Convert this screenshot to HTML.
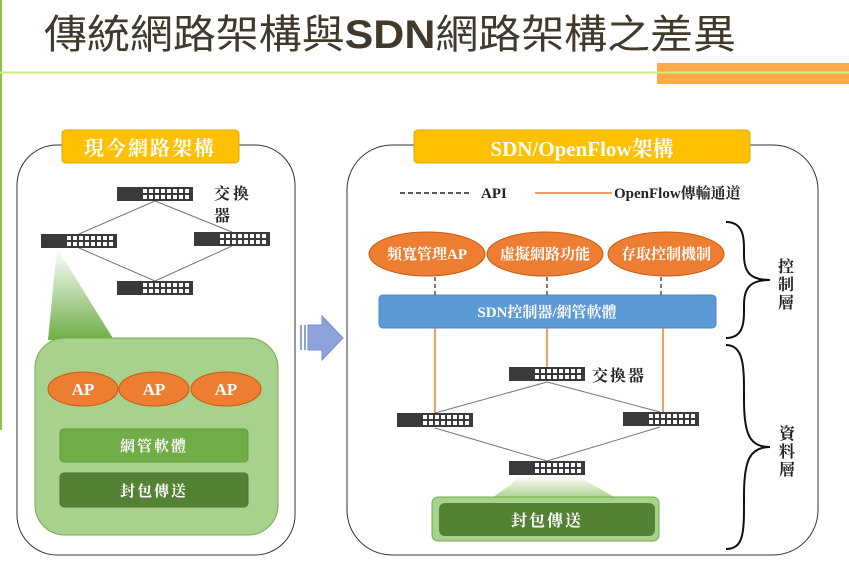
<!DOCTYPE html>
<html><head><meta charset="utf-8"><style>
html,body{margin:0;padding:0;background:#fff;width:849px;height:572px;overflow:hidden}
svg{display:block}
.t{font-family:"Liberation Serif","Noto Serif CJK SC","Noto Sans CJK TC",serif;font-weight:bold}
</style></head><body>
<svg width="849" height="572" viewBox="0 0 849 572" xmlns="http://www.w3.org/2000/svg">
<defs>
<g id="sw">
<rect x="0" y="0" width="76" height="14" fill="#3a3a3a"/>
<g fill="#fff">
<rect x="26" y="2" width="4" height="4"/><rect x="32" y="2" width="4" height="4"/><rect x="38" y="2" width="4" height="4"/><rect x="44" y="2" width="4" height="4"/><rect x="50" y="2" width="4" height="4"/><rect x="56" y="2" width="4" height="4"/><rect x="62" y="2" width="4" height="4"/><rect x="68" y="2" width="4" height="4"/>
<rect x="26" y="8" width="4" height="4"/><rect x="32" y="8" width="4" height="4"/><rect x="38" y="8" width="4" height="4"/><rect x="44" y="8" width="4" height="4"/><rect x="50" y="8" width="4" height="4"/><rect x="56" y="8" width="4" height="4"/><rect x="62" y="8" width="4" height="4"/><rect x="68" y="8" width="4" height="4"/>
</g></g>
<linearGradient id="tri" x1="0" y1="0" x2="0" y2="1"><stop offset="0" stop-color="#fff"/><stop offset="1" stop-color="#6fae47"/></linearGradient>
<linearGradient id="glow" x1="0" y1="0" x2="0" y2="1"><stop offset="0" stop-color="#fff"/><stop offset="1" stop-color="#a9d18e"/></linearGradient>
</defs>
<!-- header -->
<line x1="1" y1="0" x2="1" y2="430" stroke="#8cc63e" stroke-width="2"/>
<rect x="657" y="63" width="192" height="21" fill="#ffa94a"/>
<line x1="0" y1="72.5" x2="849" y2="72.5" stroke="#c9ef7b" stroke-width="2"/>
<text x="44" y="48" font-family="'Liberation Sans','Noto Sans CJK TC',sans-serif" font-size="40" fill="#3f3a2c" textLength="692" lengthAdjust="spacingAndGlyphs">傳統網路架構與<tspan font-weight="bold">SDN</tspan>網路架構之差異</text>

<!-- left panel -->
<rect x="17" y="145" width="278" height="410" rx="40" fill="#fff" stroke="#333" stroke-width="1"/>
<rect x="62" y="130" width="177" height="33" rx="4" fill="#ffc000" stroke="#e0a800"/>
<text class="t" x="150" y="155" font-size="20" fill="#fff" text-anchor="middle" letter-spacing="2">現今網路架構</text>
<g stroke="#777" stroke-width="1">
<line x1="155" y1="201" x2="79" y2="234"/><line x1="155" y1="201" x2="232" y2="232"/>
<line x1="79" y1="248" x2="155" y2="281"/><line x1="232" y1="246" x2="155" y2="281"/>
</g>
<use href="#sw" x="117" y="187"/><use href="#sw" x="41" y="234"/><use href="#sw" x="194" y="232"/><use href="#sw" x="117" y="281"/>
<text class="t" x="214" y="199" font-size="16" fill="#222" letter-spacing="3">交換</text>
<text class="t" x="214" y="221" font-size="16" fill="#222">器</text>
<polygon points="57,248 48,340 114,340" fill="url(#tri)"/>
<rect x="35" y="338" width="243" height="197" rx="30" fill="#a9d18e" stroke="#70ad47"/>
<g fill="#ed7d31" stroke="#c55a11" stroke-width="1">
<ellipse cx="83" cy="389" rx="35" ry="17"/><ellipse cx="154" cy="389" rx="35" ry="17"/><ellipse cx="226" cy="389" rx="35" ry="17"/>
</g>
<g class="t" font-size="17" fill="#fff" text-anchor="middle">
<text x="83" y="395">AP</text><text x="154" y="395">AP</text><text x="226" y="395">AP</text>
</g>
<rect x="60" y="429" width="188" height="33" rx="4" fill="#70ad47" stroke="#5e9a3a"/>
<rect x="60" y="473" width="188" height="34" rx="4" fill="#548235" stroke="#4a7530"/>
<text class="t" x="154" y="451" font-size="15" fill="#fff" text-anchor="middle" letter-spacing="2">網管軟體</text>
<text class="t" x="154" y="496" font-size="15" fill="#fff" text-anchor="middle" letter-spacing="2">封包傳送</text>

<!-- arrow -->
<polygon points="308,325 322,325 322,316 343,338 322,360 322,350 308,350" fill="#8ea2dc" stroke="#7a8fcc"/>
<rect x="300" y="325" width="2" height="25" fill="#8ea2dc"/><rect x="304" y="325" width="2" height="25" fill="#8ea2dc"/>

<!-- right panel -->
<rect x="347" y="145" width="471" height="410" rx="45" fill="#fff" stroke="#333" stroke-width="1"/>
<rect x="414" y="130" width="336" height="33" rx="4" fill="#ffc000" stroke="#e0a800"/>
<text class="t" x="582" y="156" font-size="21" fill="#fff" text-anchor="middle">SDN/OpenFlow架構</text>
<line x1="400" y1="193" x2="470" y2="193" stroke="#222" stroke-width="1.5" stroke-dasharray="5,3"/>
<text class="t" x="481" y="198" font-size="15" fill="#222">API</text>
<line x1="535" y1="193" x2="612" y2="193" stroke="#ed7d31" stroke-width="1.5"/>
<text class="t" x="614" y="198" font-size="15" fill="#222">OpenFlow傳輸通道</text>
<g fill="#ed7d31" stroke="#c55a11" stroke-width="1">
<ellipse cx="427" cy="254" rx="58" ry="22"/><ellipse cx="545" cy="254" rx="58" ry="22"/><ellipse cx="666" cy="254" rx="58" ry="22"/>
</g>
<g class="t" font-size="15" fill="#fff" text-anchor="middle">
<text x="427" y="259">頻寬管理AP</text><text x="545" y="259">虛擬網路功能</text><text x="666" y="259">存取控制機制</text>
</g>
<g stroke="#222" stroke-width="1.2" stroke-dasharray="4,3">
<line x1="435" y1="277" x2="435" y2="295"/><line x1="547" y1="277" x2="547" y2="295"/><line x1="661" y1="277" x2="661" y2="295"/>
</g>
<rect x="379" y="295" width="337" height="33" rx="4" fill="#5b9bd5" stroke="#4a88c2"/>
<text class="t" x="547" y="317" font-size="15" fill="#fff" text-anchor="middle">SDN控制器/網管軟體</text>
<g stroke="#ed7d31" stroke-width="1.5">
<line x1="435" y1="328" x2="435" y2="413"/><line x1="547" y1="328" x2="547" y2="367"/><line x1="663" y1="328" x2="663" y2="412"/>
</g>
<g stroke="#777" stroke-width="1">
<line x1="547" y1="382" x2="435" y2="413"/><line x1="547" y1="382" x2="660" y2="412"/>
<line x1="435" y1="428" x2="547" y2="461"/><line x1="660" y1="427" x2="547" y2="461"/>
</g>
<use href="#sw" x="509" y="367"/><use href="#sw" x="397" y="413"/><use href="#sw" x="623" y="412"/><use href="#sw" x="509" y="461"/>
<text class="t" x="592" y="381" font-size="16" fill="#222" letter-spacing="2">交換器</text>
<polygon points="522,476 578,476 616,498 492,498" fill="url(#glow)"/>
<rect x="432" y="497" width="227" height="44" rx="6" fill="#a9d18e" stroke="#70ad47"/>
<rect x="439" y="503" width="216" height="33" rx="6" fill="#548235"/>
<text class="t" x="547" y="526" font-size="16" fill="#fff" text-anchor="middle" letter-spacing="2">封包傳送</text>
<!-- braces -->
<g fill="none" stroke="#111" stroke-width="2">
<path d="M726,222 C745,222 744,240 744,255 C744,272 750,280 770,280 M770,280 C750,280 744,288 744,305 C744,320 745,338 726,338"/>
<path d="M726,345 C745,345 744,370 744,400 C744,435 750,447 770,447 M770,447 C750,447 744,460 744,495 C744,530 745,549 726,549"/>
</g>
<g class="t" font-size="16" fill="#222" text-anchor="middle">
<text x="786" y="272">控</text><text x="786" y="290">制</text><text x="786" y="308">層</text>
<text x="787" y="439">資</text><text x="787" y="457">料</text><text x="787" y="475">層</text>
</g>
</svg>
</body></html>
